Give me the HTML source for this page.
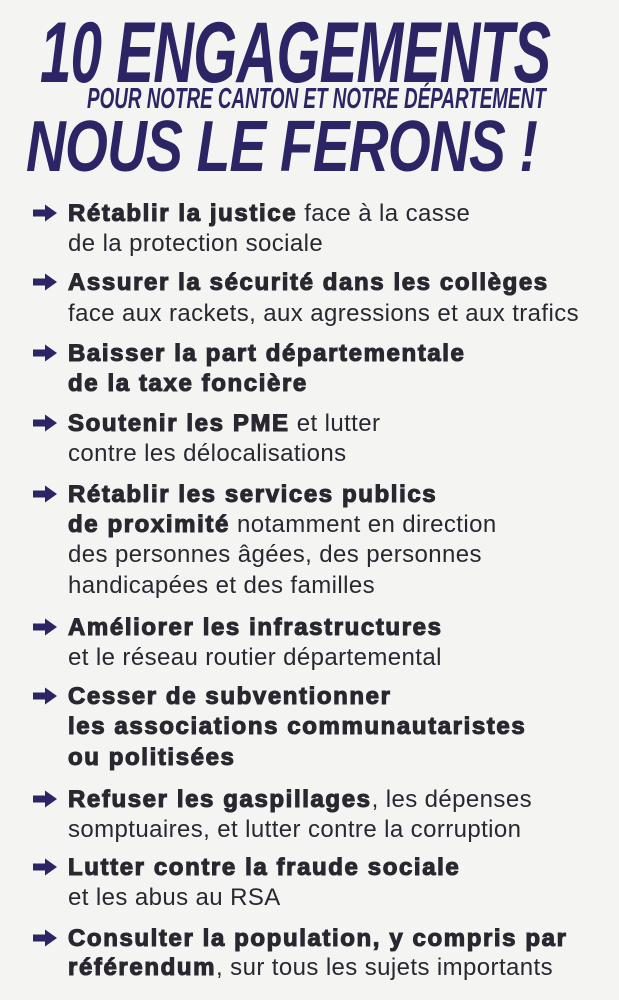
<!DOCTYPE html>
<html><head><meta charset="utf-8"><style>
body{margin:0;width:619px;height:1000px;background:#f4f4f2;overflow:hidden;position:relative;font-family:"Liberation Sans",Arial,sans-serif;}
.t{position:absolute;color:#2b2566;font-weight:bold;font-style:italic;white-space:nowrap;transform-origin:0 0;line-height:1;}
.l{position:absolute;left:68px;font-size:24px;color:#2a2730;white-space:nowrap;line-height:1;letter-spacing:0.4px;}
.l b{font-weight:bold;-webkit-text-stroke:1.1px #2a2730;letter-spacing:1.6px;}
.a{position:absolute;left:32px;width:26px;height:20px;}
</style></head><body>
<div class="t" style="left:40px;top:10px;font-size:86px;transform:scaleX(0.655);letter-spacing:-1px;">10 ENGAGEMENTS</div>
<div class="t" style="left:87px;top:85px;font-size:29px;transform:scaleX(0.65);">POUR NOTRE CANTON ET NOTRE DÉPARTEMENT</div>
<div class="t" style="left:26px;top:111px;font-size:72px;transform:scaleX(0.765);letter-spacing:-1px;">NOUS LE FERONS !</div>

<svg width="0" height="0" style="position:absolute"><defs><symbol id="ar" viewBox="0 0 26 20"><path d="M1 6.5h12V1.5l12 8.5-12 8.5v-5H1z" fill="#2b2566"/></symbol></defs></svg>

<svg class="a" style="top:203px"><use href="#ar"/></svg>
<div class="l" style="top:202px"><b>Rétablir la justice</b> face à la casse</div>
<div class="l" style="top:232px">de la protection sociale</div>

<svg class="a" style="top:272px"><use href="#ar"/></svg>
<div class="l" style="top:271px"><b>Assurer la sécurité dans les collèges</b></div>
<div class="l" style="top:302px">face aux rackets, aux agressions et aux trafics</div>

<svg class="a" style="top:343px"><use href="#ar"/></svg>
<div class="l" style="top:342px"><b>Baisser la part départementale</b></div>
<div class="l" style="top:372px"><b>de la taxe foncière</b></div>

<svg class="a" style="top:413px"><use href="#ar"/></svg>
<div class="l" style="top:412px"><b>Soutenir les PME</b> et lutter</div>
<div class="l" style="top:442px">contre les délocalisations</div>

<svg class="a" style="top:484px"><use href="#ar"/></svg>
<div class="l" style="top:483px"><b>Rétablir les services publics</b></div>
<div class="l" style="top:513px"><b>de proximité</b> notamment en direction</div>
<div class="l" style="top:543px">des personnes âgées, des personnes</div>
<div class="l" style="top:574px">handicapées et des familles</div>

<svg class="a" style="top:617px"><use href="#ar"/></svg>
<div class="l" style="top:616px"><b>Améliorer les infrastructures</b></div>
<div class="l" style="top:646px">et le réseau routier départemental</div>

<svg class="a" style="top:686px"><use href="#ar"/></svg>
<div class="l" style="top:685px"><b>Cesser de subventionner</b></div>
<div class="l" style="top:715px"><b>les associations communautaristes</b></div>
<div class="l" style="top:746px"><b>ou politisées</b></div>

<svg class="a" style="top:789px"><use href="#ar"/></svg>
<div class="l" style="top:788px"><b>Refuser les gaspillages</b>, les dépenses</div>
<div class="l" style="top:818px">somptuaires, et lutter contre la corruption</div>

<svg class="a" style="top:857px"><use href="#ar"/></svg>
<div class="l" style="top:856px"><b>Lutter contre la fraude sociale</b></div>
<div class="l" style="top:886px">et les abus au RSA</div>

<svg class="a" style="top:928px"><use href="#ar"/></svg>
<div class="l" style="top:927px"><b>Consulter la population, y compris par</b></div>
<div class="l" style="top:956px"><b>référendum</b>, sur tous les sujets importants</div>
</body></html>
